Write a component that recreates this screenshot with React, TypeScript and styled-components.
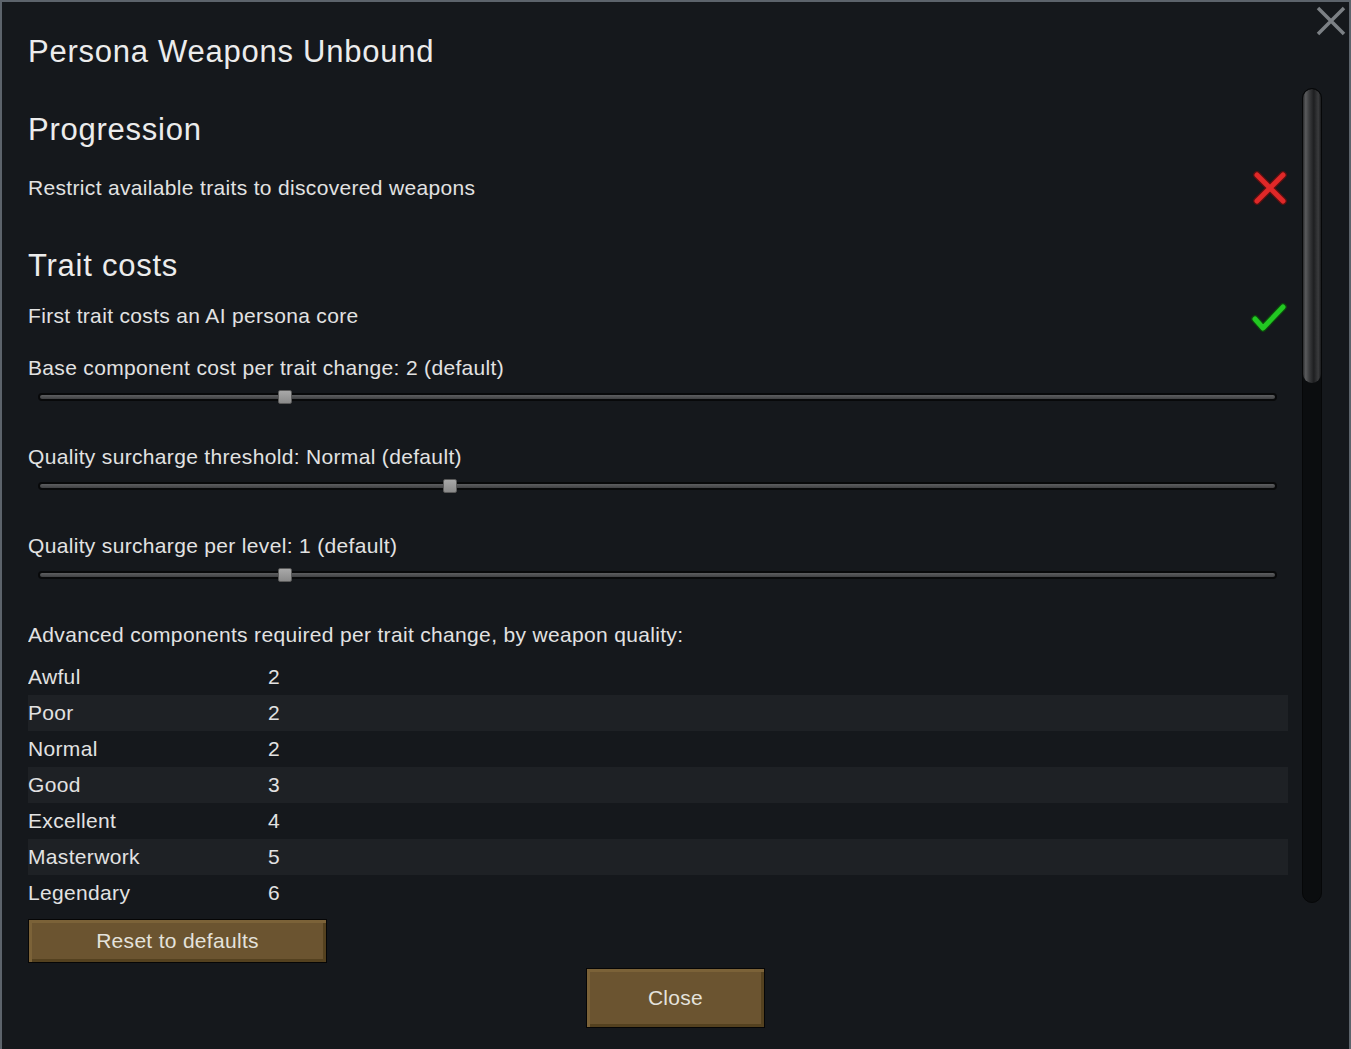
import styled, { createGlobalStyle } from "styled-components";

const GlobalStyle = createGlobalStyle`
  html, body {
    margin: 0;
    padding: 0;
    background: #0d0f12;
  }
  body {
    font-family: "Liberation Sans", Arial, sans-serif;
    color: #e2e2e2;
  }
`;

const qualities = [
  { name: "Awful", cost: 2 },
  { name: "Poor", cost: 2 },
  { name: "Normal", cost: 2 },
  { name: "Good", cost: 3 },
  { name: "Excellent", cost: 4 },
  { name: "Masterwork", cost: 5 },
  { name: "Legendary", cost: 6 },
];

const sliders = [
  { label: "Base component cost per trait change: 2 (default)", value: 0.198 },
  { label: "Quality surcharge threshold: Normal (default)", value: 0.332 },
  { label: "Quality surcharge per level: 1 (default)", value: 0.198 },
];

const CrossIcon = () => (
  <svg width="36" height="36" viewBox="0 0 36 36">
    <path d="M5 5 L31 31 M31 5 L5 31" stroke="#5a1010" strokeWidth="7.5" strokeLinecap="round" />
    <path d="M5 5 L31 31 M31 5 L5 31" stroke="#e02828" strokeWidth="5" strokeLinecap="round" />
  </svg>
);

const CheckIcon = () => (
  <svg width="38" height="36" viewBox="0 0 38 36">
    <path d="M5 21 L13 30 L33 9" fill="none" stroke="#0c4a0c" strokeWidth="7.5" strokeLinecap="round" strokeLinejoin="round" />
    <path d="M5 21 L13 30 L33 9" fill="none" stroke="#22c822" strokeWidth="5" strokeLinecap="round" strokeLinejoin="round" />
  </svg>
);

const Slider = ({ value }: { value: number }) => (
  <TrackRow>
    <Track>
      <Thumb style={{ left: `${value * 100}%` }} />
    </Track>
  </TrackRow>
);

export default function App() {
  return (
    <>
      <GlobalStyle />
      <Window>
        <CloseX>
          <svg width="30" height="30" viewBox="0 0 30 30">
            <path d="M2 2 L28 28 M28 2 L2 28" stroke="#7c8085" strokeWidth="3.5" />
          </svg>
        </CloseX>
        <Title>Persona Weapons Unbound</Title>
        <Body>
          <Content>
            <SectionTitle $top={22}>Progression</SectionTitle>
            <ToggleRow $top={18}>
              Restrict available traits to discovered weapons
              <CrossIcon />
            </ToggleRow>
            <SectionTitle $top={38}>Trait costs</SectionTitle>
            <ToggleRow $top={10}>
              First trait costs an AI persona core
              <CheckIcon />
            </ToggleRow>
            <SliderList>
              {sliders.map((s) => (
                <SliderBlock key={s.label}>
                  <Label>{s.label}</Label>
                  <Slider value={s.value} />
                </SliderBlock>
              ))}
            </SliderList>
            <Label>Advanced components required per trait change, by weapon quality:</Label>
            <Table>
              {qualities.map((q, i) => (
                <QualityRow key={q.name} $alt={i % 2 === 1}>
                  <QualityName>{q.name}</QualityName>
                  <span>{q.cost}</span>
                </QualityRow>
              ))}
            </Table>
          </Content>
          <Scrollbar>
            <ScrollThumb />
          </Scrollbar>
        </Body>
        <ResetButton>Reset to defaults</ResetButton>
        <Footer>
          <CloseButton>Close</CloseButton>
        </Footer>
      </Window>
    </>
  );
}

const Window = styled.div`
  position: relative;
  box-sizing: border-box;
  width: 1351px;
  height: 1049px;
  overflow: hidden;
  background: #15181c;
  border: 2px solid #5c636b;
  border-bottom: none;
  padding: 31px 26px 0 26px;
  display: flex;
  flex-direction: column;
  letter-spacing: 0.33px;
`;

const CloseX = styled.div`
  position: absolute;
  top: 4px;
  right: 3px;
  width: 30px;
  height: 30px;
`;

const Title = styled.h1`
  margin: 0;
  font-size: 31px;
  font-weight: normal;
  line-height: 38px;
  letter-spacing: 0.75px;
  color: #ececec;
`;

const Body = styled.div`
  margin-top: 17px;
  height: 824px;
  display: flex;
  gap: 14px;
`;

const Content = styled.div`
  width: 1260px;
  display: flex;
  flex-direction: column;
  overflow: hidden;
`;

const SectionTitle = styled.h2<{ $top: number }>`
  margin: ${(p) => p.$top}px 0 0 0;
  font-size: 31px;
  font-weight: normal;
  line-height: 40px;
  letter-spacing: 0.75px;
  color: #ececec;
`;

const ToggleRow = styled.div<{ $top: number }>`
  margin-top: ${(p) => p.$top}px;
  height: 40px;
  display: flex;
  align-items: center;
  justify-content: space-between;
  font-size: 21px;
`;

const SliderList = styled.div`
  margin-top: 18px;
  display: flex;
  flex-direction: column;
`;

const SliderBlock = styled.div`
  display: flex;
  flex-direction: column;
  margin-bottom: 31px;
`;

const Label = styled.div`
  height: 28px;
  line-height: 28px;
  font-size: 21px;
`;

const TrackRow = styled.div`
  height: 30px;
  display: flex;
  align-items: center;
  padding: 0 11px 0 10px;
`;

const Track = styled.div`
  position: relative;
  flex: 1;
  height: 4px;
  border: 2px solid #08090a;
  border-radius: 5px;
  background: linear-gradient(#5d5e60, #404143);
`;

const Thumb = styled.div`
  position: absolute;
  top: 50%;
  width: 12px;
  height: 12px;
  transform: translate(-50%, -50%);
  border: 1px solid #5a5a5a;
  border-radius: 2px;
  background: linear-gradient(#a8a8a8, #8a8a8a);
`;

const Table = styled.div`
  margin-top: 10px;
  display: flex;
  flex-direction: column;
`;

const QualityRow = styled.div<{ $alt: boolean }>`
  height: 36px;
  display: flex;
  align-items: center;
  font-size: 21px;
  background: ${(p) => (p.$alt ? "#1e2125" : "transparent")};
`;

const QualityName = styled.span`
  width: 240px;
`;

const Scrollbar = styled.div`
  width: 20px;
  height: 815px;
  box-sizing: border-box;
  border-radius: 10px;
  background: #0b0d0f;
  border: 1px solid #060708;
  overflow: hidden;
`;

const ScrollThumb = styled.div`
  height: 294px;
  border-radius: 9px;
  background: linear-gradient(
    90deg,
    #2a2b2d 0%,
    #5a5b5d 15%,
    #3a3b3d 35%,
    #1e1f21 60%,
    #3a3b3d 85%,
    #1a1b1d 100%
  );
`;

const BrownButton = styled.button`
  box-sizing: border-box;
  font-family: "Liberation Sans", Arial, sans-serif;
  font-size: 21px;
  letter-spacing: 0.3px;
  color: #e4e2dc;
  background: #6b5430;
  border: 1px solid #060606;
  box-shadow: inset 3px 3px 0 #7b6238, inset -3px -3px 0 #54411f;
  padding: 0;
  cursor: pointer;
`;

const ResetButton = styled(BrownButton)`
  margin-top: 7px;
  width: 299px;
  height: 44px;
`;

const Footer = styled.div`
  margin-top: 5px;
  display: flex;
  justify-content: center;
`;

const CloseButton = styled(BrownButton)`
  width: 179px;
  height: 60px;
`;
